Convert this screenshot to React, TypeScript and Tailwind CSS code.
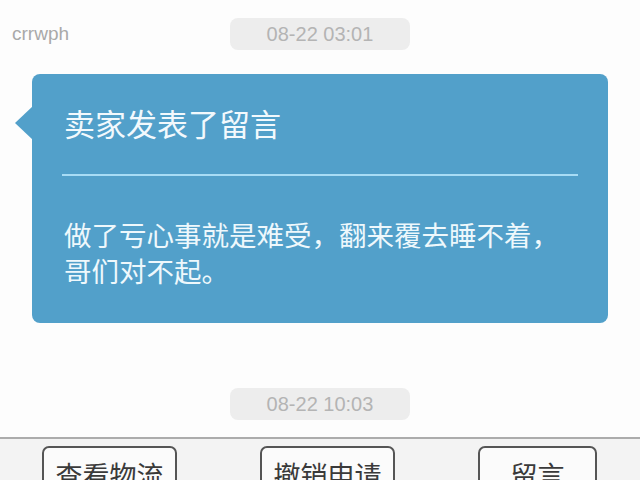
import React from "react";

const cjk = { fontFamily: '"Noto Sans CJK SC", "Noto Sans", sans-serif' };
const latin = { fontFamily: '"Liberation Sans", Arial, sans-serif' };

function TimePill({ time }: { time: string }) {
  return (
    <div
      className="w-[180px] h-[32px] shrink-0 rounded-[8px] bg-[#ededed] flex items-center justify-center text-[20px] text-[#b4b4b4]"
      style={latin}
    >
      {time}
    </div>
  );
}

export default function App() {
  const buttons = [
    { label: "查看物流", w: "w-[135px]" },
    { label: "撤销申请", w: "w-[135px]" },
    { label: "留言", w: "w-[119px]" },
  ];

  return (
    <div className="w-[640px] h-[480px] overflow-hidden bg-[#fdfdfd] flex flex-col">
      {/* top row */}
      <div className="shrink-0 grid grid-cols-[1fr_180px_1fr] items-center pt-[18px]">
        <span className="pl-[12px] text-[19px] text-[#a9a9a9]" style={latin}>
          crrwph
        </span>
        <TimePill time="08-22 03:01" />
        <span />
      </div>

      {/* message card */}
      <div
        className="relative shrink-0 mt-[24px] ml-[32px] w-[576px] h-[249px] rounded-[8px] bg-[#52a0ca] pl-[32px] pr-[30px] pt-[29px]"
        style={cjk}
      >
        <svg className="absolute left-[-18px] top-[32px]" width="19" height="34" viewBox="0 0 19 34">
          <path d="M19 0 L1 17 L19 34 Z" fill="#52a0ca" />
        </svg>
        <div className="text-[31px] leading-[40px] text-[#f2f9fd]">卖家发表了留言</div>
        <div className="mt-[31px] ml-[-2px] h-[2px] bg-[#a8dcf5]" />
        <div className="mt-[40px] text-[27.5px] leading-[36px] text-[#eef8fc]">
          做了亏心事就是难受，翻来覆去睡不着，
          <br />
          哥们对不起。
        </div>
      </div>

      <div className="shrink-0 mt-[65px] flex justify-center">
        <TimePill time="08-22 10:03" />
      </div>

      {/* bottom bar */}
      <div className="mt-[17px] flex-1 border-t-2 border-[#acacac] bg-[#f3f3f3] flex gap-[83px] pl-[42px] pt-[7px]">
        {buttons.map((b) => (
          <div
            key={b.label}
            className={`${b.w} h-[52px] shrink-0 rounded-[7px] border-2 border-[#555555] bg-[#fbfbfb] flex justify-center pt-[9px] text-[27px] leading-[36px] text-[#3a3a3a]`}
            style={cjk}
          >
            {b.label}
          </div>
        ))}
      </div>
    </div>
  );
}
